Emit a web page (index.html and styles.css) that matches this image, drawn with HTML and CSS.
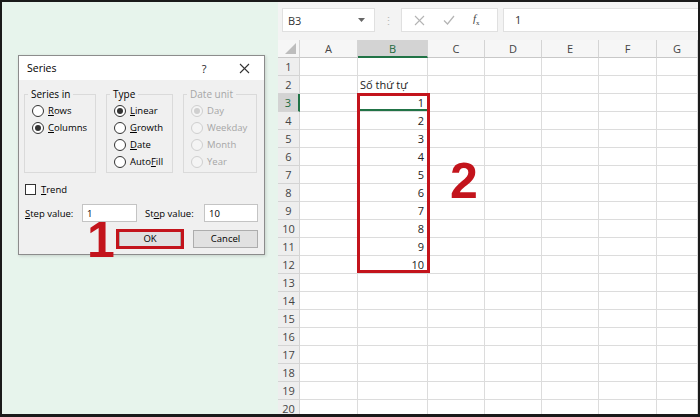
FILE: index.html
```html
<!DOCTYPE html>
<html lang="vi">
<head>
    <meta charset="UTF-8">
    <title>Series - Fill</title>
    <link rel="stylesheet" href="styles.css">
</head>
<body>
    <div class="frame">
        <!-- Left: Series dialog -->
        <div class="left-pane">
            <div class="dialog">
                <div class="dialog-title">
                    <span class="title-text">Series</span>
                    <span class="title-btn">?</span>
                    <span class="title-btn close">
                        <svg width="11" height="11" viewBox="0 0 11 11" stroke="#333" stroke-width="1.1"><line x1="1" y1="1" x2="10" y2="10"/><line x1="10" y1="1" x2="1" y2="10"/></svg>
                    </span>
                </div>
                <div class="dialog-body">
                    <div class="groups">
                        <fieldset class="group g-series">
                            <legend>Series in</legend>
                            <div class="opt"><span class="radio"></span><span><u>R</u>ows</span></div>
                            <div class="opt"><span class="radio on"></span><span><u>C</u>olumns</span></div>
                        </fieldset>
                        <fieldset class="group g-type">
                            <legend>Type</legend>
                            <div class="opt"><span class="radio on"></span><span><u>L</u>inear</span></div>
                            <div class="opt"><span class="radio"></span><span><u>G</u>rowth</span></div>
                            <div class="opt"><span class="radio"></span><span><u>D</u>ate</span></div>
                            <div class="opt"><span class="radio"></span><span>Auto<u>F</u>ill</span></div>
                        </fieldset>
                        <fieldset class="group g-date disabled">
                            <legend>Date unit</legend>
                            <div class="opt"><span class="radio on"></span><span>Day</span></div>
                            <div class="opt"><span class="radio"></span><span>Weekday</span></div>
                            <div class="opt"><span class="radio"></span><span>Month</span></div>
                            <div class="opt"><span class="radio"></span><span>Year</span></div>
                        </fieldset>
                    </div>
                    <div class="trend"><span class="check"></span><span><u>T</u>rend</span></div>
                    <div class="values">
                        <span class="lbl lbl-step"><u>S</u>tep value:</span>
                        <span class="field f-step">1</span>
                        <span class="lbl lbl-stop">St<u>o</u>p value:</span>
                        <span class="field f-stop">10</span>
                    </div>
                    <div class="buttons">
                        <span class="btn btn-ok">OK</span>
                        <span class="btn">Cancel</span>
                    </div>
                </div>
                <div class="mark-ok"></div>
                <div class="step-num num-1">1</div>
            </div>
        </div>

        <!-- Right: worksheet -->
        <div class="right-pane">
            <div class="formula-bar">
                <div class="name-box">
                    <span>B3</span>
                    <svg width="7" height="4" viewBox="0 0 7 4"><path d="M0 0h7L3.5 4z" fill="#666"/></svg>
                </div>
                <div class="grip">⋮</div>
                <div class="fx-box">
                    <svg width="11" height="11" viewBox="0 0 11 11" stroke="#b4b4b4" stroke-width="1.1"><line x1="1" y1="1" x2="10" y2="10"/><line x1="10" y1="1" x2="1" y2="10"/></svg>
                    <svg width="12" height="10" viewBox="0 0 12 10" fill="none" stroke="#b4b4b4" stroke-width="1.2"><path d="M1 5.5l3.5 3.5L11 1"/></svg>
                    <span class="fx"><i>f</i><sub>x</sub></span>
                </div>
                <div class="formula-input">1</div>
            </div>

            <div class="sheet">
                <table class="grid">
                    <tr class="col-head">
                        <th class="corner"><span class="tri"></span></th>
                        <th>A</th><th class="sel">B</th><th>C</th><th>D</th><th>E</th><th>F</th><th>G</th>
                    </tr>
                    <tr><th>1</th><td></td><td></td><td></td><td></td><td></td><td></td><td></td></tr>
                    <tr><th>2</th><td></td><td class="txt">Số thứ tự</td><td></td><td></td><td></td><td></td><td></td></tr>
                    <tr><th class="sel">3</th><td></td><td class="num active">1</td><td></td><td></td><td></td><td></td><td></td></tr>
                    <tr><th>4</th><td></td><td class="num">2</td><td></td><td></td><td></td><td></td><td></td></tr>
                    <tr><th>5</th><td></td><td class="num">3</td><td></td><td></td><td></td><td></td><td></td></tr>
                    <tr><th>6</th><td></td><td class="num">4</td><td></td><td></td><td></td><td></td><td></td></tr>
                    <tr><th>7</th><td></td><td class="num">5</td><td></td><td></td><td></td><td></td><td></td></tr>
                    <tr><th>8</th><td></td><td class="num">6</td><td></td><td></td><td></td><td></td><td></td></tr>
                    <tr><th>9</th><td></td><td class="num">7</td><td></td><td></td><td></td><td></td><td></td></tr>
                    <tr><th>10</th><td></td><td class="num">8</td><td></td><td></td><td></td><td></td><td></td></tr>
                    <tr><th>11</th><td></td><td class="num">9</td><td></td><td></td><td></td><td></td><td></td></tr>
                    <tr><th>12</th><td></td><td class="num">10</td><td></td><td></td><td></td><td></td><td></td></tr>
                    <tr><th>13</th><td></td><td></td><td></td><td></td><td></td><td></td><td></td></tr>
                    <tr><th>14</th><td></td><td></td><td></td><td></td><td></td><td></td><td></td></tr>
                    <tr><th>15</th><td></td><td></td><td></td><td></td><td></td><td></td><td></td></tr>
                    <tr><th>16</th><td></td><td></td><td></td><td></td><td></td><td></td><td></td></tr>
                    <tr><th>17</th><td></td><td></td><td></td><td></td><td></td><td></td><td></td></tr>
                    <tr><th>18</th><td></td><td></td><td></td><td></td><td></td><td></td><td></td></tr>
                    <tr><th>19</th><td></td><td></td><td></td><td></td><td></td><td></td><td></td></tr>
                    <tr><th>20</th><td></td><td></td><td></td><td></td><td></td><td></td><td></td></tr>
                </table>
                <div class="mark-range"></div>
                <div class="step-num num-2">2</div>
            </div>
        </div>
    </div>
</body>
</html>
```

FILE: styles.css
```css
* {
    margin: 0;
    padding: 0;
    box-sizing: border-box;
}

body {
    background: #fff;
    font-family: "Open Sans", "Noto Sans", sans-serif;
    color: #000;
}

.frame {
    width: 700px;
    height: 417px;
    border: 2px solid #1a1a1a;
    border-bottom-width: 3px;
    display: flex;
    overflow: hidden;
}

/* Left pane with dialog */
.left-pane {
    width: 276px;
    flex-shrink: 0;
    background: #e7f4ec;
    padding: 53px 0 0 16px;
}

.dialog {
    position: relative;
    width: 247px;
    height: 200px;
    background: #f0f0f0;
    border: 1px solid #8c8c8c;
    box-shadow: 1px 1px 3px rgba(0, 0, 0, 0.15);
    font-size: 9.5px;
}

.dialog-title {
    height: 24px;
    background: #fff;
    display: flex;
    align-items: center;
    padding-left: 8px;
}

.title-text {
    flex: 1;
    font-size: 10.5px;
}

.title-btn {
    width: 40px;
    font-size: 11px;
    color: #222;
    display: flex;
    justify-content: center;
}

.dialog-body {
    padding: 7px 6px 0 5px;
}

.groups {
    display: flex;
    gap: 10px;
}

.group {
    border: 1px solid #dadada;
    padding: 0 4px 2px 7px;
    min-height: 86px;
}

.group legend {
    padding: 0 3px;
    margin-left: -4px;
    line-height: 15px;
    font-size: 10px;
}

.g-series { width: 72px; }
.g-type { width: 67px; }
.g-date { width: 74px; }

.opt {
    display: flex;
    align-items: center;
    height: 17px;
    gap: 4px;
    white-space: nowrap;
}

.radio {
    width: 12px;
    height: 12px;
    border: 1px solid #333;
    border-radius: 50%;
    background: #fff;
    position: relative;
    flex-shrink: 0;
}

.radio.on::after {
    content: "";
    position: absolute;
    left: 2px;
    top: 2px;
    width: 6px;
    height: 6px;
    border-radius: 50%;
    background: #333;
}

.disabled,
.disabled legend {
    color: #a6a6a6;
}

.disabled .radio {
    border-color: #cfcfcf;
    background: #f4f4f4;
}

.disabled .radio.on::after {
    background: #cfcfcf;
}

.trend {
    display: flex;
    align-items: center;
    gap: 5px;
    height: 17px;
    margin-top: 8px;
    padding-left: 1px;
}

.check {
    width: 11px;
    height: 11px;
    border: 1px solid #333;
    background: #fff;
}

.values {
    display: flex;
    align-items: center;
    margin-top: 6px;
    padding-left: 1px;
}

.lbl {
    white-space: nowrap;
}

.lbl-step { width: 57px; }
.lbl-stop { width: 59px; margin-left: 8px; }

.field {
    height: 18px;
    background: #fff;
    border: 1px solid #c4c4c4;
    padding: 1px 4px;
    line-height: 15px;
}

.f-step { width: 55px; }
.f-stop { width: 54px; }

.buttons {
    display: flex;
    justify-content: flex-end;
    gap: 12px;
    margin-top: 8px;
}

.btn {
    width: 65px;
    height: 18px;
    background: #e1e1e1;
    border: 1px solid #adadad;
    text-align: center;
    line-height: 16px;
}

.btn-ok {
    width: 62px;
}

/* red callouts */
.mark-ok {
    position: absolute;
    left: 97px;
    top: 173px;
    width: 68px;
    height: 20px;
    border: 3px solid #c3141c;
}

.step-num {
    position: absolute;
    font-family: "Liberation Sans", Arial, sans-serif;
    font-weight: bold;
    font-size: 50px;
    line-height: 36px;
    color: #c3141c;
}

.num-1 {
    left: 68px;
    top: 166px;
}

/* Right pane: worksheet */
.right-pane {
    flex: 1;
    background: #f3f3f3;
    display: flex;
    flex-direction: column;
    min-height: 0;
}

.formula-bar {
    height: 38px;
    flex-shrink: 0;
    display: flex;
    align-items: center;
    padding: 0 0 2px 4px;
    font-size: 11px;
    color: #333;
}

.name-box {
    width: 93px;
    height: 24px;
    background: #fff;
    border: 1px solid #e0e0e0;
    display: flex;
    align-items: center;
    justify-content: space-between;
    padding: 0 9px 0 5px;
}

.grip {
    width: 26px;
    text-align: center;
    color: #b8b8b8;
    font-size: 11px;
}

.fx-box {
    width: 97px;
    height: 24px;
    background: #fff;
    border: 1px solid #e0e0e0;
    display: flex;
    align-items: center;
    padding-left: 12px;
    gap: 18px;
}

.fx {
    font-family: "Liberation Serif", serif;
    font-size: 11px;
    color: #444;
}

.fx sub {
    font-size: 7px;
}

.formula-input {
    flex: 1;
    height: 24px;
    margin-left: 5px;
    background: #fff;
    border: 1px solid #e0e0e0;
    border-right: none;
    padding: 0 11px;
    line-height: 22px;
}

.sheet {
    position: relative;
    flex: 1;
    min-height: 0;
    overflow: hidden;
    background: #fff;
}

.grid {
    border-collapse: separate;
    border-spacing: 0;
    table-layout: fixed;
    width: 420px;
    font-size: 11px;
}

.grid tr {
    height: 18px;
}

.grid th,
.grid td {
    border-right: 1px solid #dcdcdc;
    border-bottom: 1px solid #dcdcdc;
    padding: 0;
    height: 18px;
}

.grid th {
    background: #eeeeee;
    color: #444;
    font-weight: normal;
    text-align: center;
    border-color: #d4d4d4;
}

.col-head th {
    background: #f6f6f6;
    border-bottom-color: #c8c8c8;
}

.col-head th:nth-child(1) { width: 22px; }
.col-head th:nth-child(2) { width: 58px; }
.col-head th:nth-child(3) { width: 70px; }
.col-head th:nth-child(4) { width: 57px; }
.col-head th:nth-child(5) { width: 57px; }
.col-head th:nth-child(6) { width: 57px; }
.col-head th:nth-child(7) { width: 58px; }

.grid th.sel {
    background: #d3d3d3;
    color: #1e6b40;
}

.col-head th.sel {
    border-bottom: 2px solid #217346;
}

.grid tr th.sel:first-child {
    border-right: 2px solid #217346;
}

.corner {
    position: relative;
}

.tri {
    position: absolute;
    right: 3px;
    bottom: 3px;
    width: 0;
    height: 0;
    border-left: 11px solid transparent;
    border-bottom: 11px solid #bdbdbd;
}

.grid td.txt {
    padding-left: 2px;
    white-space: nowrap;
    color: #222;
}

.grid td.num {
    text-align: right;
    padding-right: 3px;
    color: #222;
}

.grid td.active {
    box-shadow: inset 0 -2px 0 #217346;
}

.mark-range {
    position: absolute;
    left: 79px;
    top: 53px;
    width: 73px;
    height: 180px;
    border: 3px solid #c3141c;
}

.num-2 {
    left: 172px;
    top: 123px;
}
```
